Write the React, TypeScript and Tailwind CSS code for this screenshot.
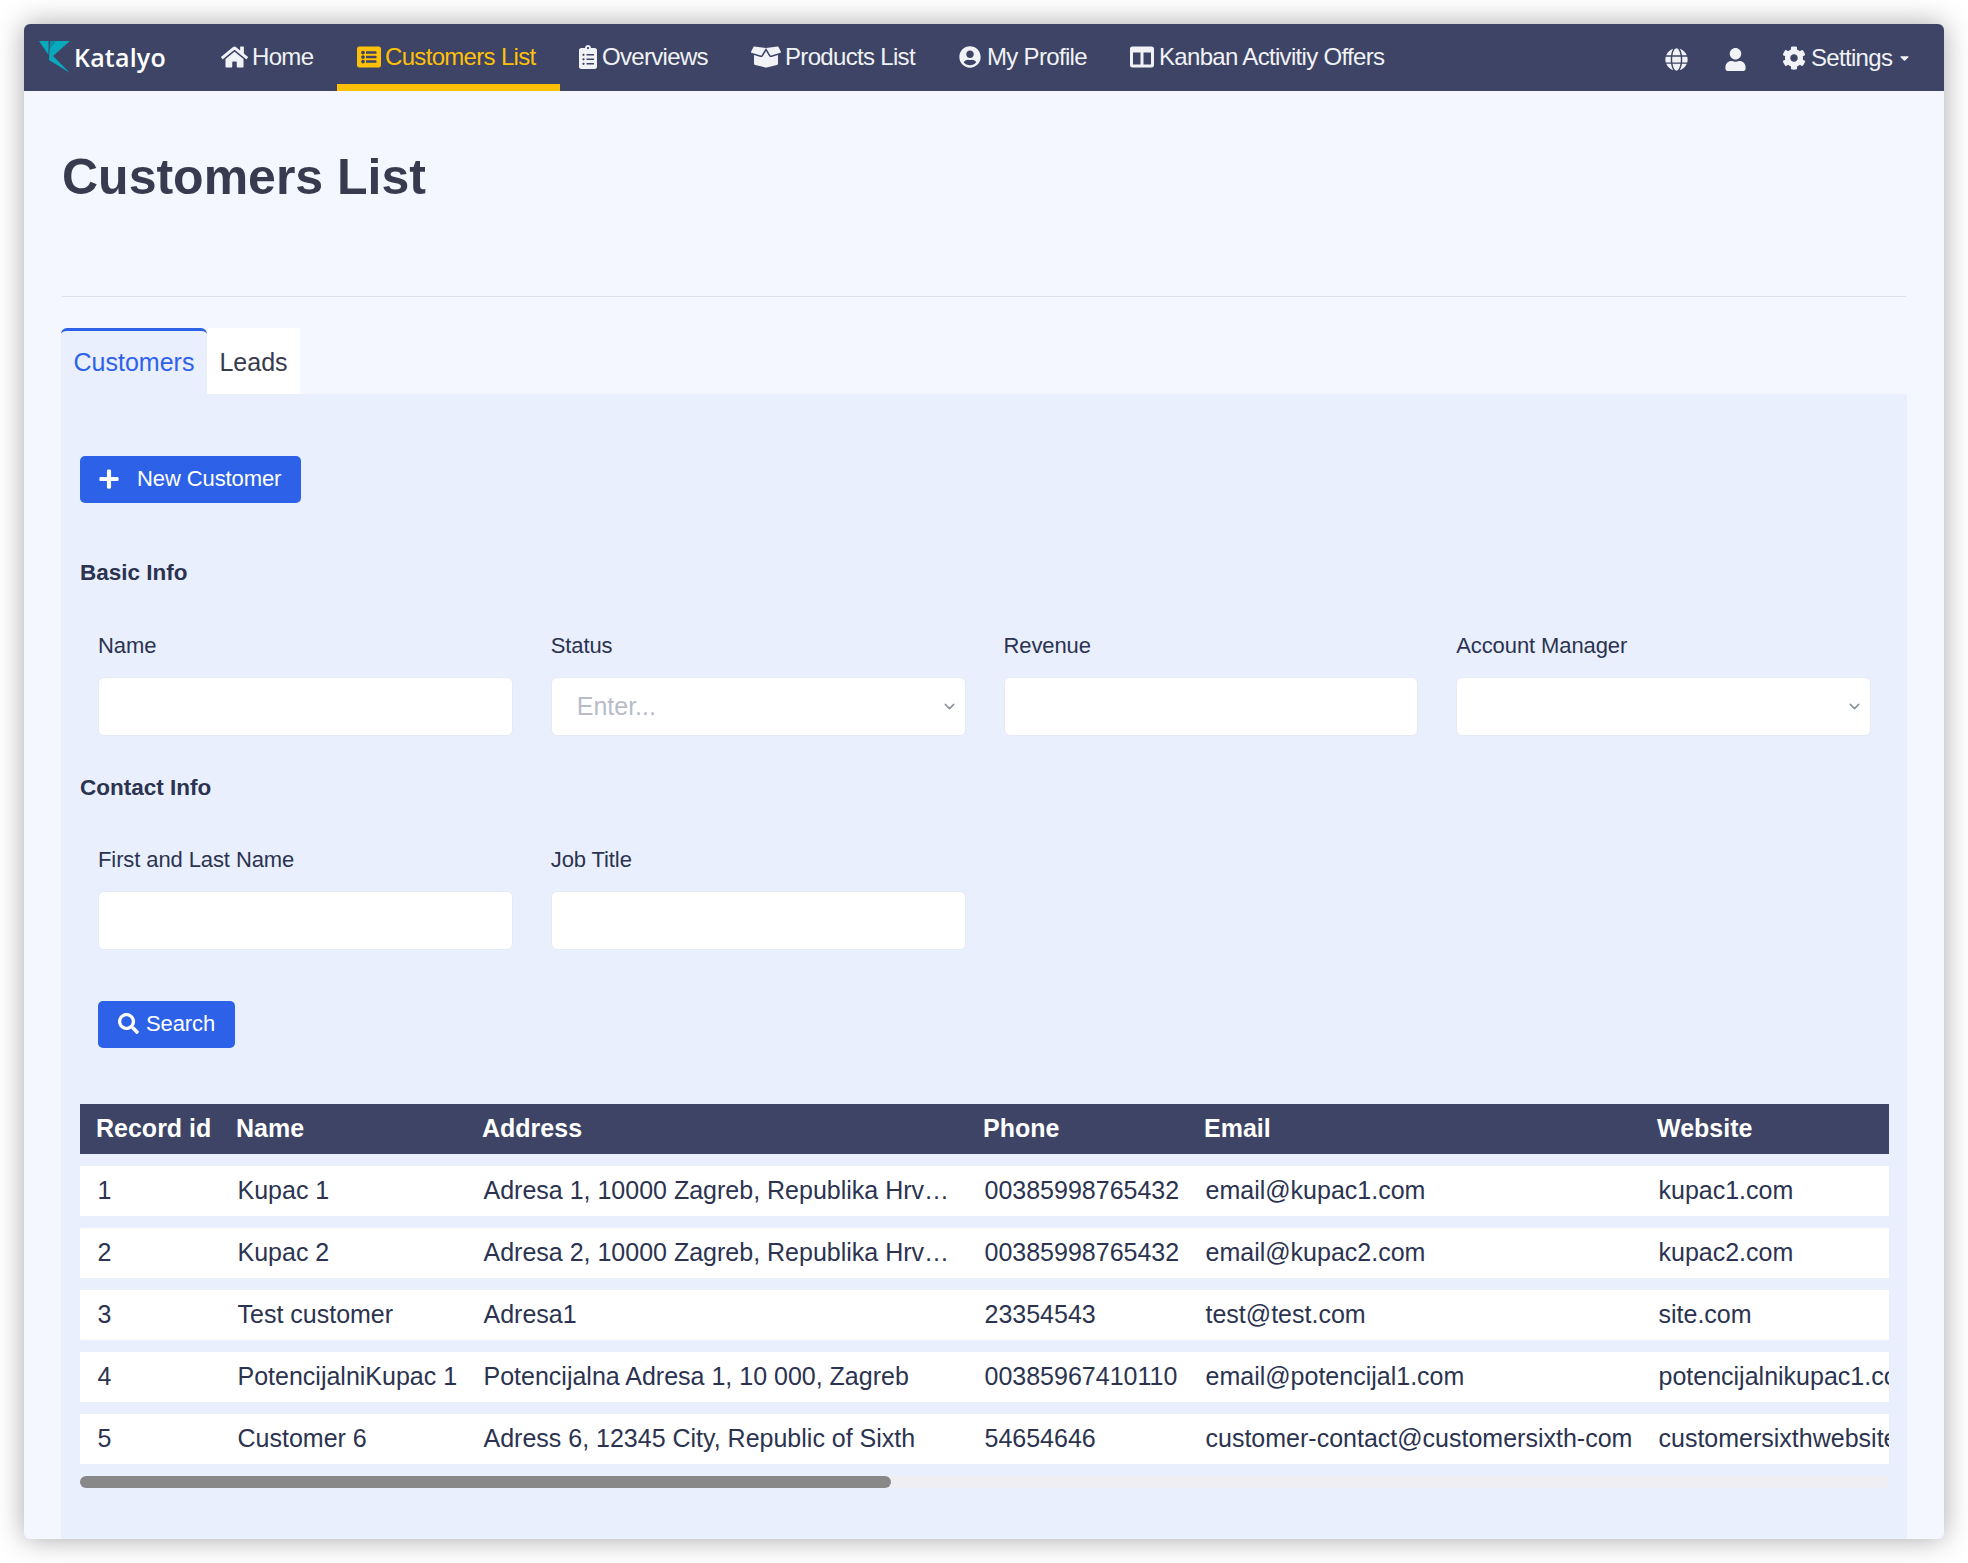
import React from "react";
import { FaHome, FaListAlt, FaClipboardList, FaBoxOpen, FaUserCircle, FaColumns, FaGlobe, FaUser, FaCog, FaSearch, FaPlus, FaCaretDown } from "react-icons/fa";
import { ChevronDown } from "lucide-react";

const rows = [
  ["1", "Kupac 1", "Adresa 1, 10000 Zagreb, Republika Hrvatska", "00385998765432", "email@kupac1.com", "kupac1.com"],
  ["2", "Kupac 2", "Adresa 2, 10000 Zagreb, Republika Hrvatska", "00385998765432", "email@kupac2.com", "kupac2.com"],
  ["3", "Test customer", "Adresa1", "23354543", "test@test.com", "site.com"],
  ["4", "PotencijalniKupac 1", "Potencijalna Adresa 1, 10 000, Zagreb", "00385967410110", "email@potencijal1.com", "potencijalnikupac1.com"],
  ["5", "Customer 6", "Adress 6, 12345 City, Republic of Sixth", "54654646", "customer-contact@customersixth-com", "customersixthwebsite.com"],
];

const cols = "grid grid-cols-[140px_246px_501px_221px_453px_400px] w-[2461px]";

function NavItem({ icon, label, active, cls }: { icon: React.ReactNode; label: string; active?: boolean; cls: string }) {
  return (
    <div className={`flex items-center h-[67px] border-b-[7px] pt-[5px] ${active ? "border-[#ffc107] text-[#ffc107]" : "border-transparent text-[#f1f2f6]"} ${cls}`}>
      {icon}
      <span className="tracking-[-0.68px]">{label}</span>
    </div>
  );
}

function Field({ label, select, placeholder }: { label: string; select?: boolean; placeholder?: string }) {
  return (
    <div className="flex flex-col">
      <div className="h-[48px] text-[22px] leading-[34px] text-[#2b3350] tracking-[-0.1px]">{label}</div>
      <div className="relative h-[59px] rounded-[6px] border border-[#e6eaf5] bg-white flex items-center pl-[25px] text-[25px] text-[#b9bcc8]">
        {placeholder}
        {select && <ChevronDown className="absolute right-[7px] top-[20px] w-[17px] h-[17px] text-[#8a8f9c]" />}
      </div>
    </div>
  );
}

export default function App() {
  return (
    <div className="min-h-[1563px] bg-white p-[24px] font-['Liberation_Sans',Arial,sans-serif]">
      <div className="h-[1515px] w-[1920px] rounded-[6px] overflow-hidden bg-[#f4f7ff] shadow-[0_0_28px_rgba(0,0,0,0.35)]">
        <nav className="h-[67px] bg-[#3d4465] flex items-center text-[24px]">
          <div className="flex items-center w-[177px] pl-[15px]">
            <svg viewBox="0 0 32 33" className="w-[32px] h-[33px] mr-[3px]">
              <polygon points="0,0 9.5,0 9.5,14" fill="#08a9bd" />
              <polygon points="11,0 31,0 14,15 31,32 10,19" fill="#08a9bd" />
              <polygon points="11,0 17,0 11,8" fill="#0c8fa6" />
            </svg>
            <span className="font-['Open_Sans',sans-serif] font-semibold text-[25px] leading-[30px] pb-[2px] text-white tracking-[0.2px]">Katalyo</span>
          </div>
          <NavItem cls="w-[136px] pl-[20px]" icon={<FaHome className="w-[27px] h-[24px] mr-[4px] shrink-0" />} label="Home" />
          <NavItem active cls="w-[223px] pl-[20px]" icon={<FaListAlt className="w-[24px] h-[24px] mr-[4px] shrink-0" />} label="Customers List" />
          <NavItem cls="w-[171px] pl-[19px]" icon={<FaClipboardList className="w-[18px] h-[24px] mr-[5px] shrink-0" />} label="Overviews" />
          <NavItem cls="w-[228px] pl-[20px]" icon={<FaBoxOpen className="w-[30px] h-[24px] mr-[4px] shrink-0" />} label="Products List" />
          <NavItem cls="w-[171px] pl-[0px]" icon={<FaUserCircle className="w-[22px] h-[22px] mr-[6px] shrink-0" />} label="My Profile" />
          <NavItem cls="w-[534px] pl-[0px]" icon={<FaColumns className="w-[24px] h-[24px] mr-[5px] shrink-0" />} label="Kanban Activitiy Offers" />
          <div className="flex items-center h-[67px] text-[#f1f2f6]">
            <FaGlobe className="w-[23px] h-[23px] mt-[4px] ml-[1px]" />
            <FaUser className="w-[21px] h-[23px] ml-[37px] mt-[4px]" />
            <FaCog className="w-[24px] h-[24px] ml-[36px] mr-[5px]" />
            <span className="tracking-[-0.68px]">Settings</span>
            <FaCaretDown className="w-[13px] h-[14px] ml-[6px]" />
          </div>
        </nav>

        <div className="px-[37px]">
          <h1 className="h-[206px] pt-[57px] mx-[1px] border-b border-[#dde1ec] text-[50px] leading-[58px] font-bold text-[#383b4f]">Customers List</h1>

          <div className="flex mt-[31px] text-[25px]">
            <div className="h-[66px] w-[146px] rounded-t-[6px] border-t-[3px] border-[#2d62e8] bg-[#e9effd] text-[#2d62e8] flex items-center justify-center">Customers</div>
            <div className="h-[66px] w-[93px] pt-[3px] bg-white text-[#383b4f] flex items-center justify-center">Leads</div>
          </div>

          <div className="h-[1145px] bg-[#e9effd] px-[19px] pt-[62px]">
            <button className="flex items-center h-[47px] w-[221px] rounded-[5px] bg-[#2d62e8] text-white text-[22px] pb-[2px] pl-[18px] tracking-[-0.1px]">
              <FaPlus className="w-[22px] h-[22px] mr-[17px]" />
              New Customer
            </button>

            <div className="mt-[55px] h-[30px] text-[22.5px] leading-[30px] font-bold text-[#2b3350]">Basic Info</div>
            <div className="mt-[41px] mx-[18px] grid grid-cols-4 gap-x-[38px] w-[1773px]">
              <Field label="Name" />
              <Field label="Status" select placeholder="Enter..." />
              <Field label="Revenue" />
              <Field label="Account Manager" select />
            </div>

            <div className="mt-[37px] h-[30px] text-[22.5px] leading-[30px] font-bold text-[#2b3350]">Contact Info</div>
            <div className="mt-[40px] mx-[18px] grid grid-cols-4 gap-x-[38px] w-[1773px]">
              <Field label="First and Last Name" />
              <Field label="Job Title" />
            </div>

            <button className="mt-[51px] ml-[18px] flex items-center h-[47px] w-[137px] rounded-[5px] bg-[#2d62e8] text-white text-[22px] pb-[2px] pl-[20px] tracking-[-0.1px]">
              <FaSearch className="w-[21px] h-[21px] mr-[7px]" />
              Search
            </button>

            <div className="mt-[56px] w-[1809px] overflow-hidden">
              <div className={`${cols} h-[50px] items-center bg-[#3d4465] text-white font-bold text-[25px] [&>div]:pl-[16px]`}>
                <div>Record id</div><div>Name</div><div>Address</div><div>Phone</div><div>Email</div><div>Website</div>
              </div>
              {rows.map((r) => (
                <div key={r[0]} className={`${cols} h-[50px] mt-[12px] items-center bg-white text-[#2b3350] text-[25px] [&>div]:pl-[17.5px]`}>
                  {r.map((c, i) => (
                    <div key={i} className={i === 2 ? "truncate pr-[8px]" : "whitespace-nowrap"}>{c}</div>
                  ))}
                </div>
              ))}
              <div className="mt-[12px] h-[12px] rounded-[6px] bg-[#efeff3]">
                <div className="h-[12px] w-[811px] rounded-[6px] bg-[#888888]" />
              </div>
            </div>
          </div>
        </div>
      </div>
    </div>
  );
}
